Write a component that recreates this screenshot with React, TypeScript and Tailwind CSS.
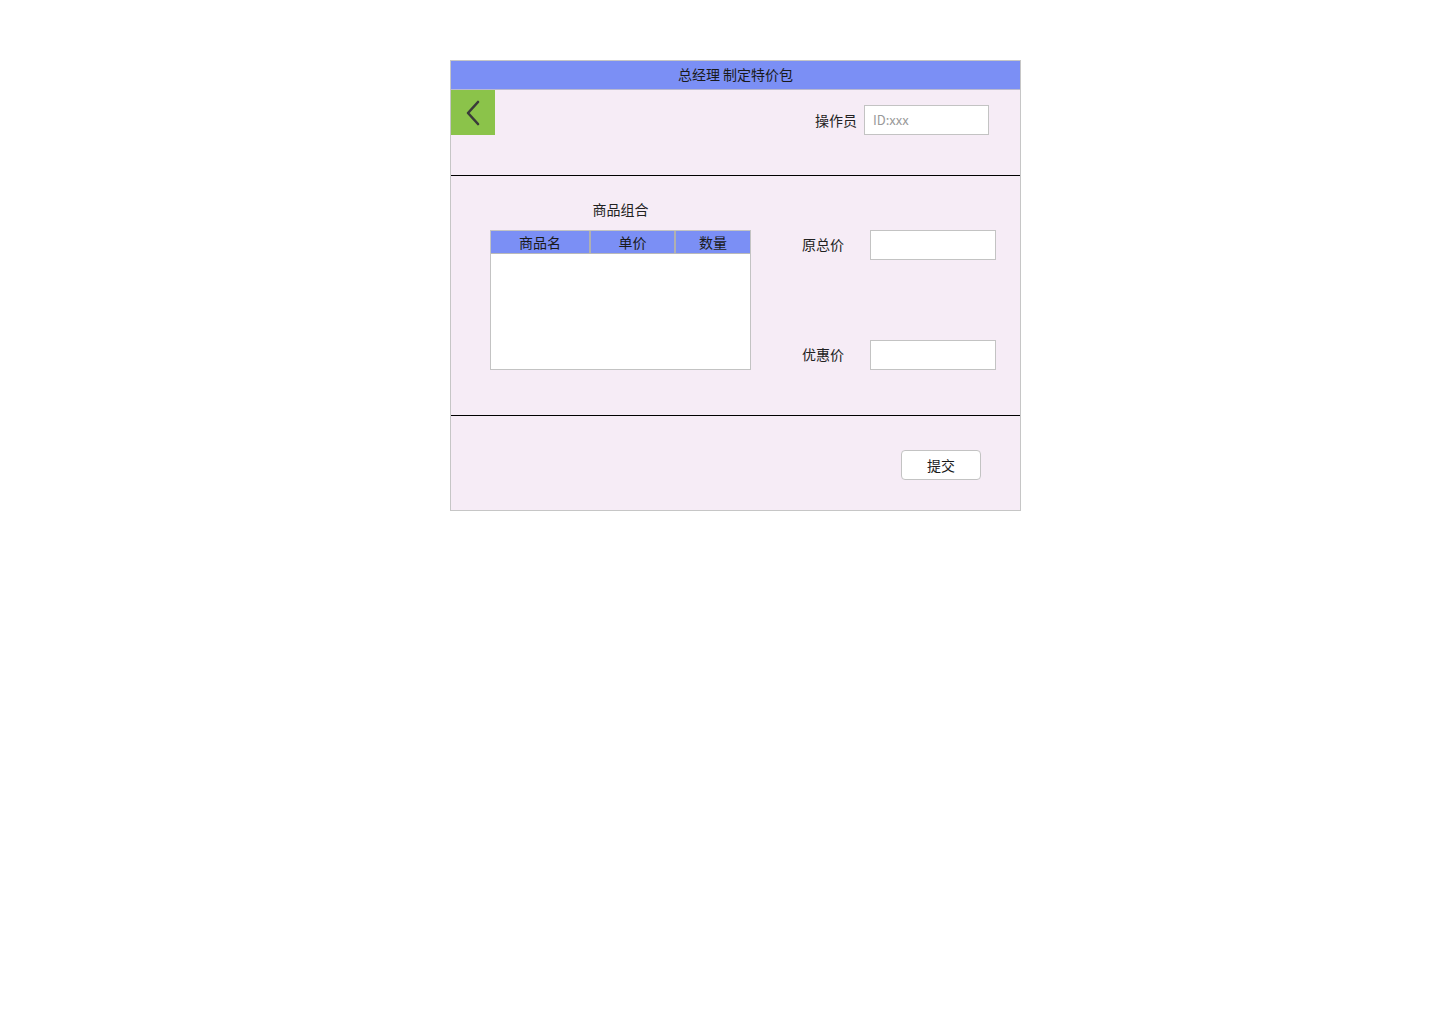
import React from "react";

export default function App() {
  const font = { fontFamily: '"Noto Sans CJK SC", "Noto Sans", sans-serif' };
  return (
    <div className="min-h-[1024px] w-[1440px] bg-white pt-[60px] pl-[450px]" style={font}>
      <div className="w-[571px] border border-[#c6c6c6] bg-[#f6ecf6] text-[#222]">
        {/* title bar */}
        <div className="flex h-[29px] items-center justify-center bg-[#7b8ff5] pb-[2px] text-[14px] text-[#1a1a1a] border-b border-[#b9b9d0]">
          总经理 制定特价包
        </div>
        {/* top section */}
        <div className="flex h-[86px] items-start border-b border-black">
          <button className="flex h-[45px] w-[44px] items-center justify-center bg-[#8bc34a]">
            <svg width="20" height="28" viewBox="0 0 20 28" fill="none">
              <path d="M15 3 L5 14 L15 25" stroke="#3a3a3a" strokeWidth="2.6" strokeLinecap="round" strokeLinejoin="round" />
            </svg>
          </button>
          <div className="flex flex-1 items-center justify-end gap-[7px] pr-[31px] pt-[15px]">
            <span className="text-[14px]">操作员</span>
            <div className="flex h-[30px] w-[125px] items-center border border-[#c3c3c3] bg-white px-[8px] text-[13px] text-[#999]">
              ID:xxx
            </div>
          </div>
        </div>
        {/* middle section */}
        <div className="flex h-[240px] border-b border-black">
          <div className="flex flex-col items-center pl-[39px] pt-[23px]">
            <div className="h-[20px] text-[14px] leading-[20px]">商品组合</div>
            <div className="mt-[11px] w-[261px] border border-[#c3c3c3] bg-white">
              <div className="flex h-[23px] bg-[#7b8ff5] text-[14px] leading-[23px] text-[#1a1a1a] border-b border-[#b9b9b9]">
                <div className="w-[100px] border-r-2 border-[#b0b0b0] text-center">商品名</div>
                <div className="w-[85px] border-r-2 border-[#b0b0b0] text-center">单价</div>
                <div className="flex-1 text-center">数量</div>
              </div>
              <div className="h-[115px]" />
            </div>
          </div>
          <div className="flex flex-col pl-[51px] pt-[53px]">
            <div className="flex h-[31px] items-center">
              <span className="w-[68px] text-[14px]">原总价</span>
              <div className="h-[30px] w-[126px] border border-[#c3c3c3] bg-white" />
            </div>
            <div className="mt-[79px] flex h-[31px] items-center">
              <span className="w-[68px] text-[14px]">优惠价</span>
              <div className="h-[30px] w-[126px] border border-[#c3c3c3] bg-white" />
            </div>
          </div>
        </div>
        {/* bottom */}
        <div className="flex h-[94px] justify-end pr-[39px] pt-[34px]">
          <button className="h-[30px] w-[80px] rounded-[4px] border border-[#c3c3c3] bg-white text-[14px] text-[#1a1a1a]">
            提交
          </button>
        </div>
      </div>
    </div>
  );
}
